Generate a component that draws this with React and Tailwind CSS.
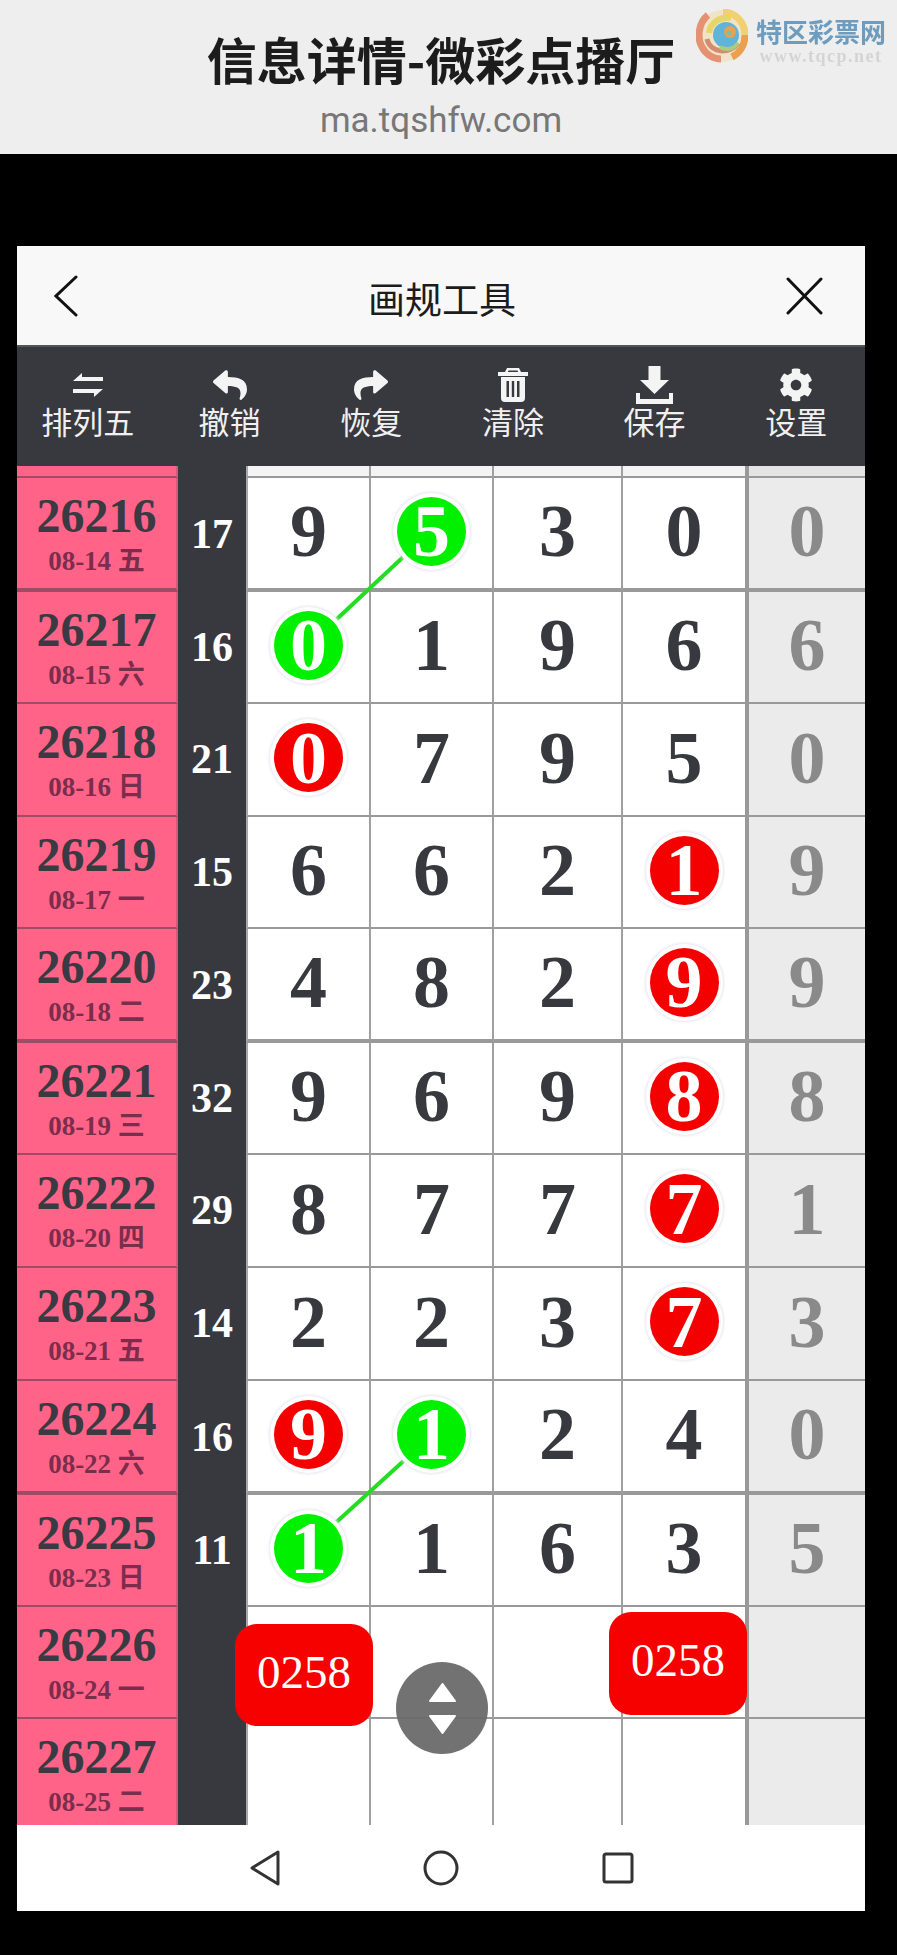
import React from 'react';
import { FaReply, FaShare, FaCog } from 'react-icons/fa';

const rows = [
  ['26216', '08-14 五', '17', ['9', '5g', '3', '0'], '0', true, 'h-[114px]'],
  ['26217', '08-15 六', '16', ['0g', '1', '9', '6'], '6', false, 'h-[112px]'],
  ['26218', '08-16 日', '21', ['0r', '7', '9', '5'], '0', false, 'h-[113px]'],
  ['26219', '08-17 一', '15', ['6', '6', '2', '1r'], '9', false, 'h-[112px]'],
  ['26220', '08-18 二', '23', ['4', '8', '2', '9r'], '9', true, 'h-[114px]'],
  ['26221', '08-19 三', '32', ['9', '6', '9', '8r'], '8', false, 'h-[112px]'],
  ['26222', '08-20 四', '29', ['8', '7', '7', '7r'], '1', false, 'h-[113px]'],
  ['26223', '08-21 五', '14', ['2', '2', '3', '7r'], '3', false, 'h-[113px]'],
  ['26224', '08-22 六', '16', ['9r', '1g', '2', '4'], '0', true, 'h-[114px]'],
  ['26225', '08-23 日', '11', ['1g', '1', '6', '3'], '5', false, 'h-[112px]'],
  ['26226', '08-24 一', '', ['', '', '', ''], '', false, 'h-[112px]'],
  ['26227', '08-25 二', '', ['', '', '', ''], '', false, 'h-[113px]'],
];

const gridCols = 'grid grid-cols-[161px_68px_125px_123px_129px_126px_116px]';
const serif = "font-['Liberation_Serif','Noto_Sans_CJK_SC',serif]";
const sans = "font-['Noto_Sans_CJK_SC','Noto_Sans',sans-serif]";

function Ball({ v }) {
  const digit = v[0];
  const bg = v[1] === 'g' ? 'bg-[#00f000]' : 'bg-[#f40000]';
  return (
    <div className={`relative z-10 flex h-[69px] w-[69px] items-center justify-center rounded-full text-white shadow-[0_0_0_4px_#ffffff,0_0_3px_5px_#e6e4ee] ${bg}`}>
      {digit}
    </div>
  );
}

function Row({ data }) {
  const [no, date, sum, cells, last, thick, height] = data;
  const bottom = thick ? 'border-b-4' : 'border-b-2';
  return (
    <div className={`${gridCols} ${height} ${serif}`}>
      <div className={`flex flex-col items-center justify-center border-r-2 border-r-[#d8587c] bg-[#ff6488] border-b-[#a04a66] ${bottom}`}>
        <div className="text-[48px] font-bold leading-[52px] text-[#3a3a42]">{no}</div>
        <div className="mt-[3px] text-[27px] font-bold leading-[32px] text-[#7c2c4c]">{date}</div>
      </div>
      <div className="flex items-center justify-center bg-[#38383f] pb-[2px] text-[42px] font-bold text-white">{sum}</div>
      {cells.map((c, i) => (
        <div
          key={i}
          className={`flex items-center justify-center border-b-[#999999] bg-white pb-[4px] text-[74px] font-bold leading-none text-[#38383f] ${bottom} ${i === 3 ? 'border-r-4 border-r-[#999999]' : 'border-r-2 border-r-[#a0a0a0]'} ${i === 0 ? 'border-l-2 border-l-[#a8a8a8]' : ''}`}
        >
          {c.length > 1 ? <Ball v={c} /> : c}
        </div>
      ))}
      <div className={`flex items-center justify-center border-b-[#999999] bg-[#ebebeb] pb-[4px] text-[74px] font-bold leading-none text-[#8a8a8a] ${bottom}`}>
        {last}
      </div>
    </div>
  );
}

function TopStub() {
  return (
    <div className={`${gridCols} h-[12px]`}>
      <div className="border-b-2 border-r-2 border-b-[#a04a66] border-r-[#d8587c] bg-[#ff6488]" />
      <div className="bg-[#38383f]" />
      {[0, 1, 2].map((i) => (
        <div key={i} className={`border-b-2 border-r-2 border-b-[#999999] border-r-[#a0a0a0] bg-[#f4f4f4] ${i === 0 ? 'border-l-2 border-l-[#a8a8a8]' : ''}`} />
      ))}
      <div className="border-b-2 border-r-4 border-b-[#999999] border-r-[#999999] bg-[#f4f4f4]" />
      <div className="border-b-2 border-b-[#999999] bg-[#e4e4e4]" />
    </div>
  );
}

function Tool({ icon, label }) {
  return (
    <div className="flex flex-col items-center">
      <div className="flex h-[40px] items-center justify-center text-[#f4f4f4]">{icon}</div>
      <div className={`-mt-[2px] text-[31px] leading-[36px] text-[#f0f0f0] ${sans}`}>{label}</div>
    </div>
  );
}

const SwapIcon = (
  <svg width="30" height="24" viewBox="0 0 30 24" fill="currentColor">
    <path d="M9 0 L9 4 L30 4 L30 8 L0 8 Z" />
    <path d="M21 24 L21 20 L0 20 L0 16 L30 16 Z" />
  </svg>
);

const TrashIcon = (
  <svg width="30" height="34" viewBox="0 0 30 34" fill="currentColor">
    <path fillRule="evenodd" d="M9 0 H21 L23 4 H30 V8 H0 V4 H7 Z M10.5 2.5 L9.8 4 H20.2 L19.5 2.5 Z" />
    <path fillRule="evenodd" d="M3 9 H27 V30 Q27 34 23 34 H7 Q3 34 3 30 Z M8.5 13 V29 H11 V13 Z M13.8 13 V29 H16.2 V13 Z M19 13 V29 H21.5 V13 Z" />
  </svg>
);

const DownloadIcon = (
  <svg width="37" height="38" viewBox="0 0 37 38" fill="currentColor">
    <path d="M12.5 0 H24.5 V14 H33 L18.5 28 L4 14 H12.5 Z" />
    <path d="M0 27 H4 V33 H33 V27 H37 V38 H0 Z" />
  </svg>
);

function Logo() {
  return (
    <div className="absolute left-[696px] top-[9px] flex items-start blur-[0.5px]">
      <svg width="52" height="54" viewBox="0 0 52 54" fill="none">
        <ellipse cx="26" cy="27" rx="25" ry="26" fill="#f0e4c8" />
        <path d="M12 6 C2 14 1 30 6 38 C10 46 18 50 25 50" stroke="#e59272" strokeWidth="7" />
        <path d="M27 3 C38 3 49 12 49 26" stroke="#f0d070" strokeWidth="7" />
        <path d="M49 26 C49 36 44 44 36 48" stroke="#eba050" strokeWidth="7" />
        <path d="M13 24 C14 14 24 7 35 9" stroke="#e6d668" strokeWidth="6" />
        <path d="M11 30 C14 44 34 46 42 34" stroke="#d88a70" strokeWidth="5" />
        <circle cx="30" cy="26" r="13" fill="#5fb4d8" />
        <path d="M24 38 C30 42 38 40 42 34" stroke="#a8cc80" strokeWidth="4" />
        <circle cx="34" cy="23" r="6" fill="#eba050" />
        <circle cx="33" cy="24" r="2.5" fill="#7fbf9a" />
      </svg>
      <div className="ml-[7px] mt-[9px] flex w-[132px] flex-col items-center">
        <div className={`text-[26px] font-bold leading-[26px] whitespace-nowrap text-[#6d9cbe] ${sans}`}>特区彩票网</div>
        <div className={`mt-[3px] text-[18px] font-bold leading-[18px] tracking-[1.5px] whitespace-nowrap text-[#d4d4d4] ${serif}`}>www.tqcp.net</div>
      </div>
    </div>
  );
}

export default function App() {
  return (
    <div className={`flex h-[1955px] w-[897px] flex-col overflow-hidden bg-black ${sans}`}>
      <header className="relative flex h-[154px] flex-col items-center bg-[#eeeeee] pr-[15px]">
        <div className="mt-[30px] text-[50px] font-bold leading-[56px] text-[#1c1c1c] whitespace-nowrap">信息详情-微彩点播厅</div>
        <div className="mt-[15px] font-['Roboto',sans-serif] text-[35px] leading-[40px] text-[#777777]">ma.tqshfw.com</div>
        <Logo />
      </header>

      <div className="h-[92px]" />

      <div className="mx-[17px] flex w-[848px] flex-col">
        <div className="flex h-[99px] items-center justify-between bg-[#f8f8f8] pl-[37px] pr-[42px]">
          <svg width="24" height="42" viewBox="0 0 24 42" fill="none" stroke="#111111" strokeWidth="3" strokeLinecap="round">
            <path d="M22 2 L2 21 L22 40" />
          </svg>
          <div className="ml-[20px] mt-[5px] text-[37px] leading-[44px] text-[#1c1c1c]">画规工具</div>
          <svg width="37" height="38" viewBox="0 0 37 38" fill="none" stroke="#111111" strokeWidth="3" strokeLinecap="round">
            <path d="M2 2 L35 36 M35 2 L2 36" />
          </svg>
        </div>

        <div className="grid h-[121px] grid-cols-[repeat(6,141.7px)] border-t-2 border-t-[#555555] bg-[#38383f] pt-[18px]">
          <Tool icon={SwapIcon} label="排列五" />
          <Tool icon={<FaReply size={34} />} label="撤销" />
          <Tool icon={<FaShare size={34} />} label="恢复" />
          <Tool icon={TrashIcon} label="清除" />
          <Tool icon={DownloadIcon} label="保存" />
          <Tool icon={<FaCog size={34} />} label="设置" />
        </div>

        <div className="relative h-[1359px] overflow-hidden">
          <TopStub />
          {rows.map((r) => (
            <Row key={r[0]} data={r} />
          ))}
          <svg className="absolute left-0 top-0 z-0" width="848" height="1359" fill="none" stroke="#22dd22" strokeWidth="4">
            <path d="M414 65 L291 180" />
            <path d="M414 970 L291 1082" />
          </svg>
          <div className={`absolute left-[218px] top-[1158px] z-20 flex h-[102px] w-[138px] items-center justify-center rounded-[22px] bg-[#f60000] pb-[6px] text-[47px] text-white ${serif}`}>0258</div>
          <div className={`absolute left-[592px] top-[1146px] z-20 flex h-[103px] w-[138px] items-center justify-center rounded-[22px] bg-[#f60000] pb-[6px] text-[47px] text-white ${serif}`}>0258</div>
          <div className="absolute left-[379px] top-[1196px] z-20 flex h-[92px] w-[92px] flex-col items-center justify-center gap-[13px] rounded-full bg-[#6a6a6a]/95">
            <svg width="27" height="19" viewBox="0 0 27 19" fill="#ffffff" stroke="#ffffff" strokeWidth="2" strokeLinejoin="round"><path d="M13.5 1 L26 18 H1 Z" /></svg>
            <svg width="27" height="19" viewBox="0 0 27 19" fill="#ffffff" stroke="#ffffff" strokeWidth="2" strokeLinejoin="round"><path d="M1 1 H26 L13.5 18 Z" /></svg>
          </div>
        </div>

        <div className="flex h-[86px] items-center bg-white pl-[233px]">
          <svg width="30" height="36" viewBox="0 0 30 36" fill="none" stroke="#333333" strokeWidth="3" strokeLinejoin="round">
            <path d="M28 2 V34 L2 18 Z" />
          </svg>
          <svg className="ml-[143px]" width="36" height="36" viewBox="0 0 36 36" fill="none" stroke="#333333" strokeWidth="3">
            <circle cx="18" cy="18" r="16" />
          </svg>
          <svg className="ml-[143px]" width="32" height="32" viewBox="0 0 32 32" fill="none" stroke="#333333" strokeWidth="3" strokeLinejoin="round">
            <rect x="2" y="2" width="28" height="28" rx="2" />
          </svg>
        </div>
      </div>
    </div>
  );
}
